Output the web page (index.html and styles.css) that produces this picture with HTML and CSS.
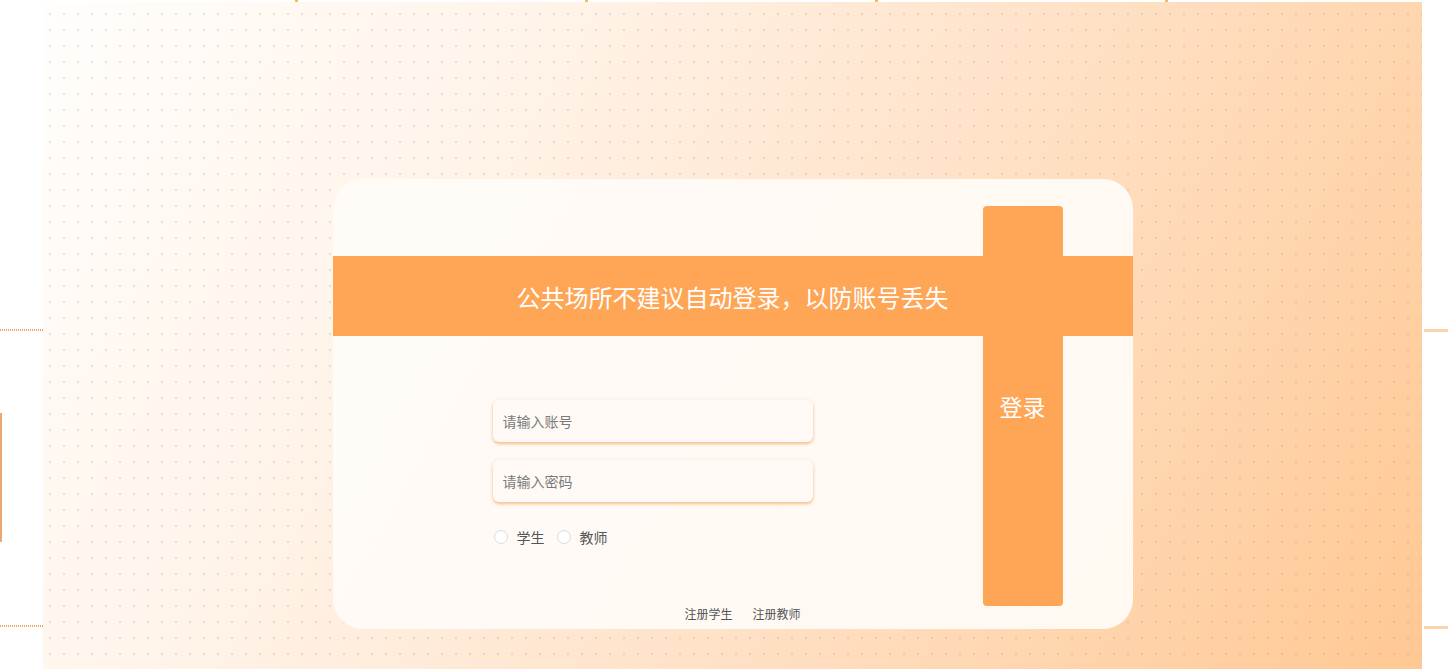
FILE: index.html
```html
<!DOCTYPE html>
<html lang="zh-CN">
<head>
    <meta charset="UTF-8">
    <meta name="viewport" content="width=device-width, initial-scale=1.0">
    <title>登录</title>
    <link rel="stylesheet" href="styles.css">
</head>
<body>
    <!-- 顶部小标记 -->
    <div class="top-marks">
        <span class="mark"></span>
        <span class="mark"></span>
        <span class="mark"></span>
        <span class="mark"></span>
    </div>

    <div class="stage">
        <div class="side-left">
            <div class="dash"></div>
            <div class="edge"></div>
            <div class="dash dash-low"></div>
        </div>

        <div class="panel">
            <div class="login-card">
                <div class="notice">公共场所不建议自动登录，以防账号丢失</div>

                <form class="login-form" onsubmit="return false;">
                    <input class="field" type="text" placeholder="请输入账号">
                    <input class="field" type="password" placeholder="请输入密码">

                    <div class="roles">
                        <label class="role"><input type="radio" name="role" value="student"><span class="dot"></span>学生</label>
                        <label class="role"><input type="radio" name="role" value="teacher"><span class="dot"></span>教师</label>
                    </div>
                </form>

                <div class="register">
                    <a href="#" class="reg-link">注册学生</a>
                    <a href="#" class="reg-link">注册教师</a>
                </div>

                <button class="login-btn" type="button">登录</button>
            </div>
        </div>

        <div class="side-right">
            <div class="line"></div>
            <div class="line line-low"></div>
        </div>
    </div>
</body>
</html>
```

FILE: styles.css
```css
:root {
    --orange: #ffa556;
    --text: #555;
    --hint: #7a7a7a;
}

html, body {
    margin: 0;
    padding: 0;
    background: #fff;
    overflow: hidden;
}

body {
    font-family: "Noto Sans CJK SC", "Noto Sans", sans-serif;
    color: var(--text);
}

/* 顶部小标记 */
.top-marks {
    display: flex;
    height: 2px;
    padding-left: 295px;
    gap: 287px;
}

.mark {
    width: 3px;
    height: 2px;
    background: #f2bb5c;
}

.stage {
    display: flex;
    height: 667px;
}

/* 两侧装饰 */
.side-left {
    width: 43px;
    padding-top: 327px;
}

.dash {
    height: 2px;
    background: repeating-linear-gradient(90deg, #e9aa62 0 1px, transparent 1px 2px);
}

.dash-low {
    margin-top: 83px;
}

.edge {
    margin-top: 82px;
    width: 2px;
    height: 129px;
    background: #eaa874;
}

.side-right {
    width: 24px;
    padding-left: 2px;
    padding-top: 327px;
}

.line {
    height: 3px;
    background: #fdd2ae;
}

.line-low {
    margin-top: 294px;
}

/* 主面板 */
.panel {
    width: 1379px;
    padding-top: 177px;
    box-sizing: border-box;
    background-color: #ffe8d4;
    background-image:
        radial-gradient(circle, rgba(160, 130, 115, 0.2) 1.1px, transparent 1.6px),
        linear-gradient(120deg, #fffefc 0%, #fff4ea 28%, #ffe2c8 58%, #ffc893 100%);
    background-size: 14px 16px, 100% 100%;
    background-position: 0 4px, 0 0;
}

/* 登录卡片 */
.login-card {
    position: relative;
    width: 800px;
    height: 450px;
    margin: 0 auto;
    padding-top: 77px;
    box-sizing: border-box;
    border-radius: 30px;
    background: rgba(255, 251, 247, 0.94);
}

.notice {
    height: 80px;
    display: flex;
    align-items: center;
    justify-content: center;
    background: var(--orange);
    color: #fff;
    font-size: 24px;
}

.login-form {
    display: flex;
    flex-direction: column;
    padding: 64px 0 0 160px;
}

.field {
    width: 320px;
    height: 42px;
    box-sizing: border-box;
    margin-bottom: 18px;
    padding: 0 10px 1px;
    border: none;
    border-radius: 6px;
    background: #fffaf5;
    box-shadow: 0 2px 3px rgba(245, 145, 60, 0.55), 0 0 5px rgba(0, 0, 0, 0.05);
    font-family: inherit;
    font-size: 14px;
    color: var(--text);
    outline: none;
}

.field::placeholder {
    color: var(--hint);
}

.roles {
    display: flex;
    align-items: center;
    height: 20px;
    margin-top: 7px;
    gap: 11px;
}

.role {
    display: flex;
    align-items: center;
    font-size: 14px;
    color: var(--text);
    cursor: pointer;
}

.role input {
    display: none;
}

.dot {
    width: 14px;
    height: 14px;
    box-sizing: border-box;
    margin: 0 9px 0 1px;
    border: 1px solid #ddd;
    border-radius: 50%;
    background: #fff;
}

.role input:checked + .dot {
    border: 4px solid var(--orange);
}

.register {
    display: flex;
    gap: 20px;
    margin-top: 59px;
    padding-left: 352px;
    line-height: 16px;
}

.reg-link {
    font-size: 12px;
    color: var(--text);
    text-decoration: none;
}

/* 登录按钮压在横幅上 */
.login-btn {
    position: absolute;
    top: 27px;
    left: 650px;
    width: 80px;
    height: 400px;
    border: none;
    border-radius: 4px;
    background: var(--orange);
    color: #fff;
    font-family: inherit;
    font-size: 23px;
    cursor: pointer;
}
```
